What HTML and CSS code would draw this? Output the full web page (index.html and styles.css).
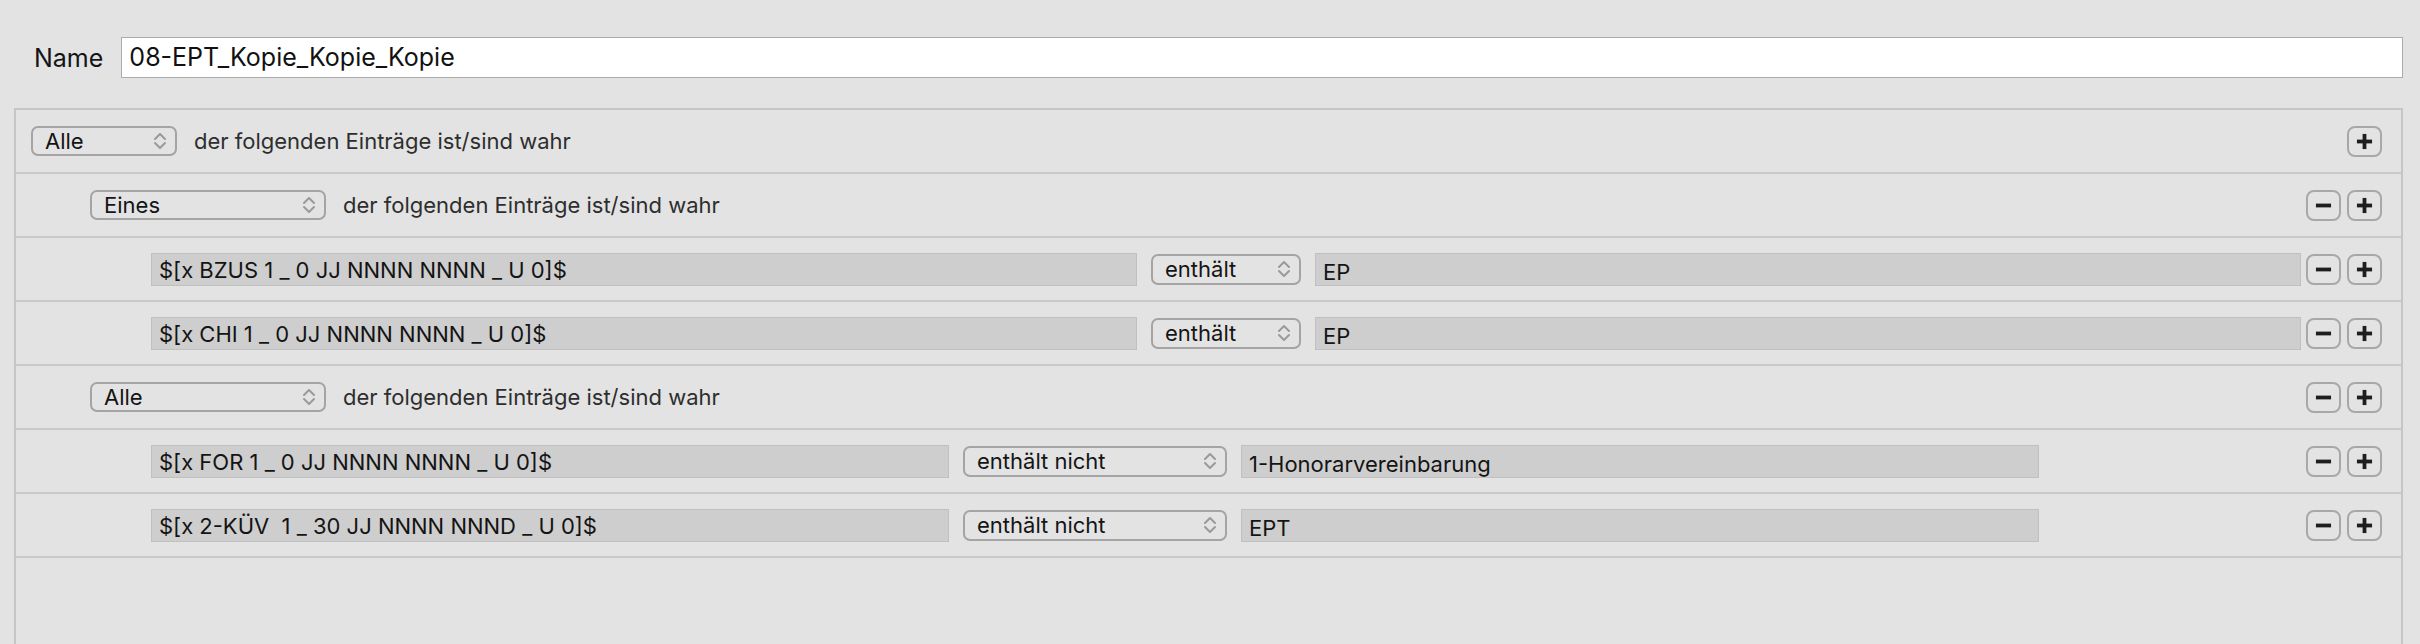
FILE: index.html
```html
<!DOCTYPE html>
<html lang="de">
<head>
<meta charset="utf-8">
<title>Regel</title>
<link rel="stylesheet" href="styles.css">
</head>
<body>
<div class="name-row">
  <span class="name-label">Name</span>
  <div class="name-input">08-EPT_Kopie_Kopie_Kopie</div>
</div>

<div class="panel">
  <div class="row lvl0">
    <div class="popup w-top"><span>Alle</span><svg class="chev" viewBox="0 0 14 20"><polyline points="2,8 7,3 12,8"/><polyline points="2,12 7,17 12,12"/></svg></div>
    <span class="desc">der folgenden Einträge ist/sind wahr</span>
    <div class="btns">
      <div class="btn"><svg viewBox="0 0 18 18"><rect x="1" y="7" width="16" height="4"/><rect x="7" y="1" width="4" height="16"/></svg></div>
    </div>
  </div>

  <div class="row lvl1">
    <div class="popup w-group"><span>Eines</span><svg class="chev" viewBox="0 0 14 20"><polyline points="2,8 7,3 12,8"/><polyline points="2,12 7,17 12,12"/></svg></div>
    <span class="desc">der folgenden Einträge ist/sind wahr</span>
    <div class="btns">
      <div class="btn"><svg viewBox="0 0 18 18"><rect x="1" y="7" width="16" height="4"/></svg></div>
      <div class="btn"><svg viewBox="0 0 18 18"><rect x="1" y="7" width="16" height="4"/><rect x="7" y="1" width="4" height="16"/></svg></div>
    </div>
  </div>

  <div class="row lvl2">
    <div class="field w-wide">$[x BZUS 1 _ 0 JJ NNNN NNNN _ U 0]$</div>
    <div class="popup w-op"><span>enthält</span><svg class="chev" viewBox="0 0 14 20"><polyline points="2,8 7,3 12,8"/><polyline points="2,12 7,17 12,12"/></svg></div>
    <div class="field value w-wide">EP</div>
    <div class="btns">
      <div class="btn"><svg viewBox="0 0 18 18"><rect x="1" y="7" width="16" height="4"/></svg></div>
      <div class="btn"><svg viewBox="0 0 18 18"><rect x="1" y="7" width="16" height="4"/><rect x="7" y="1" width="4" height="16"/></svg></div>
    </div>
  </div>

  <div class="row lvl2">
    <div class="field w-wide">$[x CHI 1 _ 0 JJ NNNN NNNN _ U 0]$</div>
    <div class="popup w-op"><span>enthält</span><svg class="chev" viewBox="0 0 14 20"><polyline points="2,8 7,3 12,8"/><polyline points="2,12 7,17 12,12"/></svg></div>
    <div class="field value w-wide">EP</div>
    <div class="btns">
      <div class="btn"><svg viewBox="0 0 18 18"><rect x="1" y="7" width="16" height="4"/></svg></div>
      <div class="btn"><svg viewBox="0 0 18 18"><rect x="1" y="7" width="16" height="4"/><rect x="7" y="1" width="4" height="16"/></svg></div>
    </div>
  </div>

  <div class="row lvl1">
    <div class="popup w-group"><span>Alle</span><svg class="chev" viewBox="0 0 14 20"><polyline points="2,8 7,3 12,8"/><polyline points="2,12 7,17 12,12"/></svg></div>
    <span class="desc">der folgenden Einträge ist/sind wahr</span>
    <div class="btns">
      <div class="btn"><svg viewBox="0 0 18 18"><rect x="1" y="7" width="16" height="4"/></svg></div>
      <div class="btn"><svg viewBox="0 0 18 18"><rect x="1" y="7" width="16" height="4"/><rect x="7" y="1" width="4" height="16"/></svg></div>
    </div>
  </div>

  <div class="row lvl2">
    <div class="field w-mid">$[x FOR 1 _ 0 JJ NNNN NNNN _ U 0]$</div>
    <div class="popup w-opn"><span>enthält nicht</span><svg class="chev" viewBox="0 0 14 20"><polyline points="2,8 7,3 12,8"/><polyline points="2,12 7,17 12,12"/></svg></div>
    <div class="field value w-mid">1-Honorarvereinbarung</div>
    <div class="btns">
      <div class="btn"><svg viewBox="0 0 18 18"><rect x="1" y="7" width="16" height="4"/></svg></div>
      <div class="btn"><svg viewBox="0 0 18 18"><rect x="1" y="7" width="16" height="4"/><rect x="7" y="1" width="4" height="16"/></svg></div>
    </div>
  </div>

  <div class="row lvl2">
    <div class="field w-mid">$[x 2-KÜV&nbsp; 1 _ 30 JJ NNNN NNND _ U 0]$</div>
    <div class="popup w-opn"><span>enthält nicht</span><svg class="chev" viewBox="0 0 14 20"><polyline points="2,8 7,3 12,8"/><polyline points="2,12 7,17 12,12"/></svg></div>
    <div class="field value w-mid">EPT</div>
    <div class="btns">
      <div class="btn"><svg viewBox="0 0 18 18"><rect x="1" y="7" width="16" height="4"/></svg></div>
      <div class="btn"><svg viewBox="0 0 18 18"><rect x="1" y="7" width="16" height="4"/><rect x="7" y="1" width="4" height="16"/></svg></div>
    </div>
  </div>
</div>
</body>
</html>
```
FILE: styles.css
```css
html, body {
  margin: 0;
  padding: 0;
  background: #e3e3e3;
  overflow: hidden;
}
body {
  font-family: "Inter", "Roboto", "Liberation Sans", sans-serif;
  color: #161616;
  width: 2420px;
  height: 644px;
}

.name-row {
  display: flex;
  align-items: center;
  margin: 37px 17px 0 34px;
  height: 41px;
}
.name-label {
  font-size: 25px;
  color: #151515;
  margin-right: 18px;
}
.name-input {
  flex: 1;
  height: 41px;
  box-sizing: border-box;
  background: #ffffff;
  border: 1px solid #ababab;
  padding-left: 7px;
  font-size: 25px;
  line-height: 39px;
  color: #111111;
}

.panel {
  margin: 30px 17px 0 14px;
  height: 560px;
  border: 2px solid #c6c6c6;
  border-bottom: none;
}

.row {
  display: flex;
  align-items: center;
  height: 62px;
  border-bottom: 2px solid #c9c9c9;
  padding-right: 19px;
  font-size: 22px;
}
.lvl0 { padding-left: 15px; }
.lvl1 { padding-left: 74px; }
.lvl2 { padding-left: 135px; }

.popup {
  box-sizing: border-box;
  height: 30px;
  border: 2px solid #a4a4a4;
  border-radius: 7px;
  display: flex;
  align-items: center;
  justify-content: space-between;
  padding: 0 8px 0 12px;
  color: #141414;
  flex-shrink: 0;
}
.lvl2 .popup { height: 31px; }
.w-top { width: 146px; }
.w-group { width: 236px; }
.w-op { width: 150px; margin: 0 14px; }
.w-opn { width: 264px; margin: 0 14px; }

.chev {
  width: 14px;
  height: 20px;
  fill: none;
  stroke: #9a9a9a;
  stroke-width: 2;
  stroke-linecap: round;
  stroke-linejoin: round;
}

.desc {
  margin-left: 17px;
  color: #2e2e2e;
}

.field {
  box-sizing: border-box;
  height: 33px;
  background: #cecece;
  border: 1px solid #c0c0c0;
  padding: 2px 0 0 7px;
  line-height: 29px;
  color: #141414;
  white-space: pre;
  flex-shrink: 0;
}
.value { padding-top: 4px; }
.w-wide { width: 986px; }
.w-mid { width: 798px; }

.btns {
  margin-left: auto;
  display: flex;
  gap: 6px;
}
.btn {
  box-sizing: border-box;
  width: 35px;
  height: 31px;
  border: 2px solid #a8a8a8;
  border-radius: 8px;
  display: flex;
  align-items: center;
  justify-content: center;
}
.btn svg {
  width: 17px;
  height: 17px;
  fill: #1e1e1e;
}
```
